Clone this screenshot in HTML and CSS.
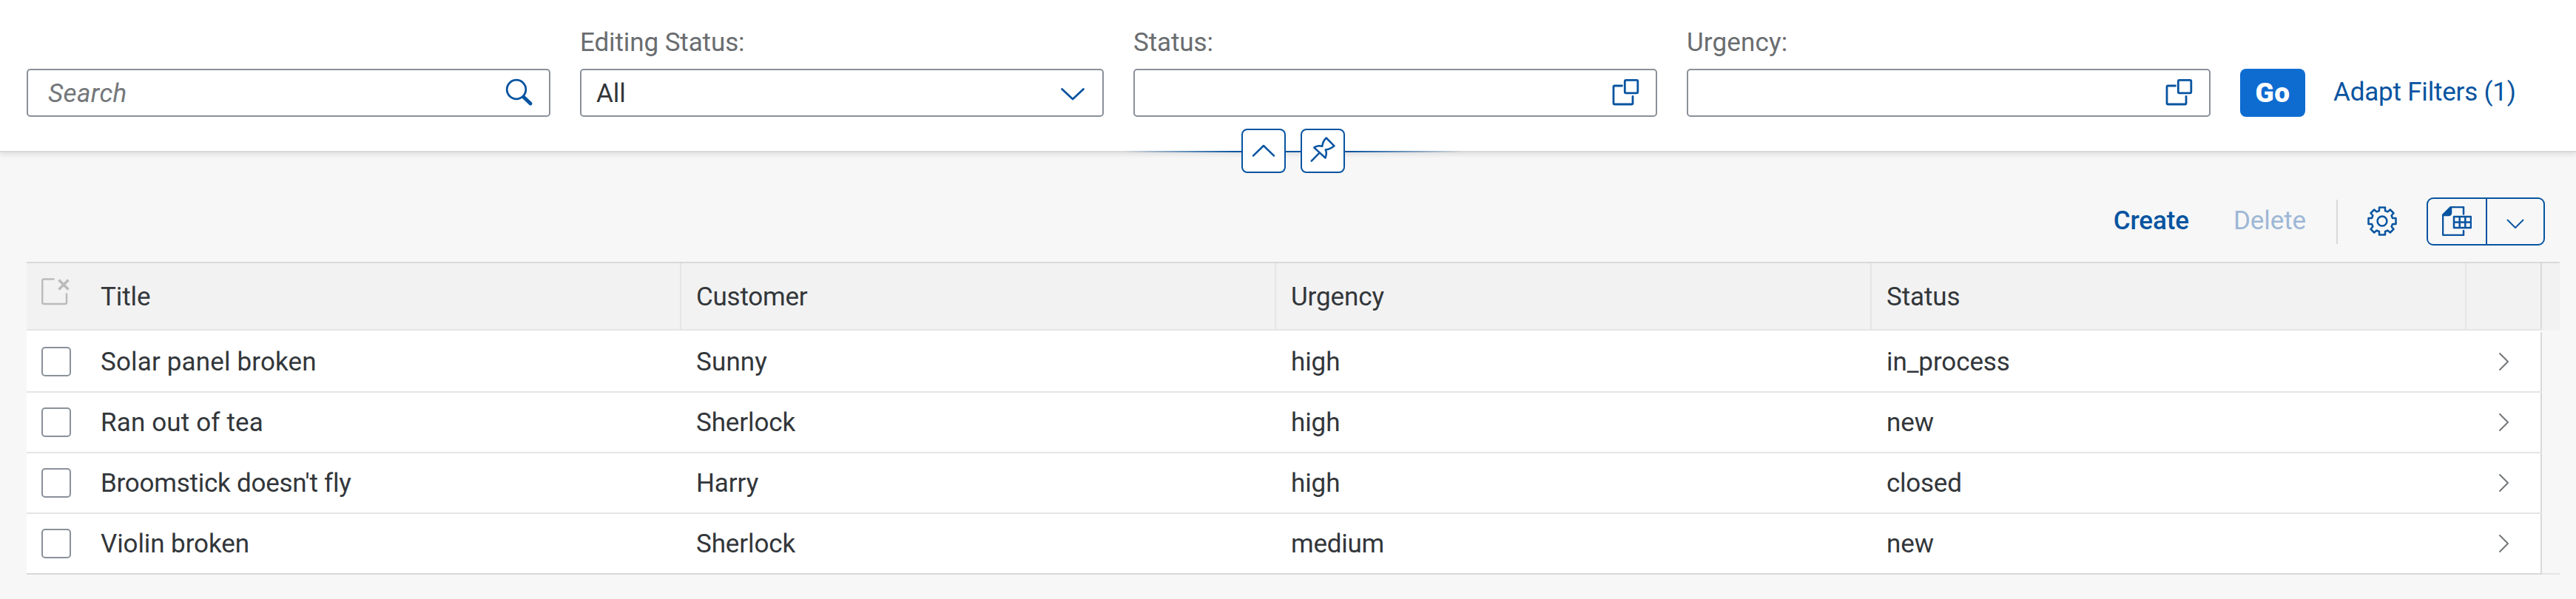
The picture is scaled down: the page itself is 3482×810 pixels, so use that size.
FILE: index.html
```
<!DOCTYPE html>
<html lang="en">
<head>
<meta charset="utf-8">
<title>Incidents</title>
<link rel="stylesheet" href="styles.css">
</head>
<body>
<header class="filter-bar">
  <div class="filters">
    <div class="field">
      <div class="input"><span class="placeholder">Search</span>
        <svg class="icon" width="40" height="40" viewBox="0 0 40 40"><circle cx="16" cy="15" r="12.8"/><path class="handle" d="M26 25.500 35 34"/></svg>
      </div>
    </div>
    <div class="field">
      <label class="label">Editing Status:</label>
      <div class="input"><span class="value">All</span>
        <svg class="icon" width="40" height="40" viewBox="0 0 40 40"><path d="m5.500 14.500 14.500 13.500 14.500-13.500"/></svg>
      </div>
    </div>
    <div class="field">
      <label class="label">Status:</label>
      <div class="input">
        <svg class="icon" width="40" height="40" viewBox="0 0 40 40"><rect x="18.300" y="2.300" width="17.500" height="17.500" rx="1.500"/><path d="M14.500 10H4.500a1.500 1.500 0 0 0-1.500 1.500V33.500A1.500 1.500 0 0 0 4.500 35H27.500A1.500 1.500 0 0 0 29 33.500V24.500"/></svg>
      </div>
    </div>
    <div class="field">
      <label class="label wide">Urgency:</label>
      <div class="input">
        <svg class="icon" width="40" height="40" viewBox="0 0 40 40"><rect x="18.300" y="2.300" width="17.500" height="17.500" rx="1.500"/><path d="M14.500 10H4.500a1.500 1.500 0 0 0-1.500 1.500V33.500A1.500 1.500 0 0 0 4.500 35H27.500A1.500 1.500 0 0 0 29 33.500V24.500"/></svg>
      </div>
    </div>
    <button class="go">Go</button>
    <a class="adapt">Adapt Filters (1)</a>
  </div>
  <div class="accent"></div>
  <div class="pins">
    <button class="pin-button"><svg width="56" height="56" viewBox="2 2 56 56"><path d="m16 36.700 14-13.700 14 13.700"/></svg></button>
    <button class="pin-button"><svg width="56" height="56" viewBox="2 2 56 56"><path d="M34.700 12.500 45.500 23.300Q40 28 33.700 28.500 36 33 33.500 39.500L18.300 25.600Q23 22.500 29.300 23.700 30 17 34.700 12.500ZM25.800 32.300 14.800 43.700"/></svg></button>
  </div>
</header>
<main class="content">
  <div class="toolbar">
    <button class="link create">Create</button>
    <button class="link delete">Delete</button>
    <span class="divider"></span>
    <svg class="gear" width="40" height="40" viewBox="0 0 40 40"><circle cx="20" cy="20" r="6.400"/><path d="M16 1.500h8v4.500l3.500 1.400 3.300-2.900 4.700 4.700-2.900 3.300 1.400 3.500h4.500v8H34l-1.400 3.500 2.900 3.300-4.700 4.700-3.300-2.900-3.500 1.400v4.500h-8V34l-3.500-1.400-3.300 2.900-4.700-4.700 2.900-3.300L6 24H1.500v-8H6l1.400-3.500-2.900-3.300 4.700-4.700 3.300 2.900L16 6Z"/></svg>
    <div class="split">
      <span class="split-main"><svg width="40" height="40" viewBox="0 0 40 40"><path class="solid" d="M1 12 12 1V9a3 3 0 0 1-3 3Z"/><path d="M1 12 12 1H29V10.500M1 12V37.500A1.500 1.500 0 0 0 2.500 39H29V33"/><path d="M16 14H39V29H16ZM16 21.500H39M23.700 14V29M31.300 14V29"/></svg></span>
      <span class="split-arrow"><svg width="24" height="14" viewBox="0 0 24 14"><path d="m1.500 1.500 10.500 10.500L22.500 1.500"/></svg></span>
    </div>
  </div>
  <div class="table">
    <div class="row head">
      <div class="cell check"><svg width="40" height="40" viewBox="0 0 40 40"><path d="M17.500 3.500H3A2 2 0 0 0 1.200 5.500V35A2 2 0 0 0 3 37H32A2 2 0 0 0 34 35V22.500"/><path class="cross" d="m23.500 4.500 13 13m0-13-13 13"/></svg></div>
      <div class="cell">Title</div><div class="cell tight">Customer</div><div class="cell">Urgency</div><div class="cell">Status</div><div class="cell nav"></div><div class="gutter"></div>
    </div>
    <div class="row first">
      <div class="cell check"><span class="box"></span></div>
      <div class="cell wide">Solar panel broken</div><div class="cell wide">Sunny</div><div class="cell">high</div><div class="cell">in_process</div>
      <div class="cell nav"><svg width="16" height="26" viewBox="0 0 16 26"><path d="m2 2 11 11L2 24"/></svg></div>
    </div>
    <div class="row">
      <div class="cell check"><span class="box"></span></div>
      <div class="cell wide">Ran out of tea</div><div class="cell">Sherlock</div><div class="cell">high</div><div class="cell">new</div>
      <div class="cell nav"><svg width="16" height="26" viewBox="0 0 16 26"><path d="m2 2 11 11L2 24"/></svg></div>
    </div>
    <div class="row">
      <div class="cell check"><span class="box"></span></div>
      <div class="cell tight">Broomstick doesn't fly</div><div class="cell">Harry</div><div class="cell">high</div><div class="cell tight">closed</div>
      <div class="cell nav"><svg width="16" height="26" viewBox="0 0 16 26"><path d="m2 2 11 11L2 24"/></svg></div>
    </div>
    <div class="row last">
      <div class="cell check"><span class="box"></span></div>
      <div class="cell">Violin broken</div><div class="cell">Sherlock</div><div class="cell tight">medium</div><div class="cell">new</div>
      <div class="cell nav"><svg width="16" height="26" viewBox="0 0 16 26"><path d="m2 2 11 11L2 24"/></svg></div>
      <div class="gutter"></div>
    </div>
  </div>
</main>
</body>
</html>
```
FILE: styles.css
```
* { box-sizing: border-box; }
body {
  margin: 0;
  height: 810px;
  overflow: hidden;
  background: #f7f7f7;
  color: #32363a;
  font: 35px/40px Roboto, "Liberation Sans", sans-serif;
  letter-spacing: -0.1px;
}
.wide { letter-spacing: 0.15px; }
.tight { letter-spacing: -0.25px; }
button {
  margin: 0;
  padding: 0;
  border: 0;
  background: none;
  font: inherit;
  letter-spacing: inherit;
}
svg {
  display: block;
  flex: none;
  fill: none;
  stroke: #0854a0;
  stroke-width: 2.5;
  stroke-linecap: round;
  stroke-linejoin: round;
}

/* Filter bar */
.filter-bar {
  position: relative;
  height: 206px;
  background: #fff;
  border-bottom: 2px solid #d9d9d9;
  box-shadow: 0 2px 8px rgba(0, 0, 0, 0.12);
}
.filters {
  display: flex;
  align-items: flex-end;
  gap: 40px;
  height: 158px;
  padding-left: 36px;
}
.field { width: 708px; }
.label {
  display: block;
  margin-bottom: 15px;
  color: #6a6d70;
}
.input {
  display: flex;
  align-items: center;
  height: 65px;
  padding: 0 20px;
  border: 2px solid #89919a;
  border-radius: 5px;
  background: #fff;
}
.input .icon {
  margin-left: auto;
  stroke-width: 2.8;
}
.icon .handle { stroke-width: 5; }
.value,
.placeholder { padding-top: 2px; }
.placeholder {
  padding-left: 7px;
  color: #74777a;
  font-style: italic;
  letter-spacing: 0.4px;
}
.go {
  width: 88px;
  height: 65px;
  border-radius: 8px;
  background: #0e6cd1;
  color: #fff;
  font-size: 37px;
  font-weight: 900;
  letter-spacing: 0.5px;
}
.adapt {
  height: 65px;
  margin-left: -2px;
  color: #0854a0;
  letter-spacing: -0.2px;
  line-height: 64px;
}
.accent {
  position: absolute;
  top: 204px;
  left: 1518px;
  width: 460px;
  height: 2px;
  background: linear-gradient(90deg, rgba(8, 84, 160, 0), #0854a0 33%, #0854a0 67%, rgba(8, 84, 160, 0));
}
.pins {
  position: absolute;
  top: 174px;
  left: 1678px;
  display: flex;
  gap: 20px;
}
.pin-button {
  width: 60px;
  height: 60px;
  border: 2px solid #0854a0;
  border-radius: 8px;
  background: #fff;
}

/* Table toolbar */
.toolbar {
  display: flex;
  align-items: center;
  justify-content: flex-end;
  height: 148px;
  padding: 39px 42px 0 0;
}
.link {
  padding-bottom: 1px;
  color: #0854a0;
}
.create { font-weight: 500; }
.delete {
  margin: 0 41px 0 60px;
  color: #9eb7d6;
}
.divider {
  width: 2px;
  height: 60px;
  background: #d9d9d9;
}
.gear {
  margin: 0 40px 2px;
}
.split {
  display: flex;
  width: 160px;
  height: 65px;
  border: 2px solid #0854a0;
  border-radius: 9px;
}
.split-main,
.split-arrow {
  display: flex;
  align-items: center;
}
.split-main {
  width: 80px;
  padding: 0 0 2px 19px;
  border-right: 2px solid #0854a0;
}
.split-arrow {
  flex: 1;
  justify-content: center;
  padding-top: 6px;
}
.split-arrow svg { stroke-width: 1.8; }
.solid { fill: #0854a0; }

/* Table */
.table { margin: 0 22px 0 36px; }
.row {
  position: relative;
  display: grid;
  grid-template-columns: 85px 800px 804px 805px 804px 102px;
  width: 3400px;
  height: 82px;
  border-bottom: 2px solid #e5e5e5;
  background: #fff;
}
.cell {
  display: flex;
  align-items: center;
  padding: 2px 0 0 20px;
}
.cell.check { padding-top: 0; }
.cell.check + .cell { padding-left: 15px; }
.cell.nav {
  padding: 0 0 0 43px;
  border-right: 2px solid #d9d9d9;
}
.nav svg {
  margin-bottom: 1px;
  stroke: #74777a;
  stroke-width: 2;
}
.box {
  width: 40px;
  height: 40px;
  border: 2px solid #89919a;
  border-radius: 5px;
  background: #fff;
}
.head {
  height: 93px;
  border-top: 2px solid #d9d9d9;
  background: #f2f2f2;
}
.head .cell { border-right: 2px solid #e5e5e5; }
.head .check { border-right: 0; }
.head .check svg {
  margin-bottom: 13px;
  stroke: #bbb;
  stroke-linecap: butt;
}
.head .check .cross { stroke-width: 3.6; }
.head .nav { border-right-color: #d9d9d9; }
.gutter {
  position: absolute;
  left: 100%;
  width: 24px;
}
.head .gutter {
  top: -2px;
  height: 93px;
  border-top: 2px solid #d9d9d9;
  background: #f2f2f2;
}
.first {
  height: 84px;
  padding-top: 2px;
}
.last { border-bottom-color: #d9d9d9; }
.last .gutter {
  bottom: -2px;
  height: 2px;
  background: #e5e5e5;
}
```
